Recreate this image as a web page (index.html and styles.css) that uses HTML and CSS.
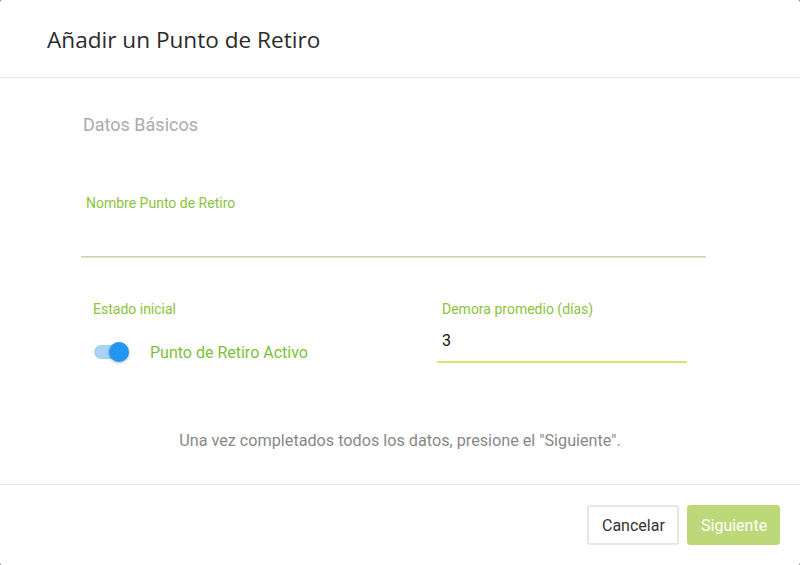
FILE: index.html
```html
<!DOCTYPE html>
<html lang="es">
<head>
<meta charset="utf-8">
<link rel="stylesheet" href="styles.css">
</head>
<body>
<div class="modal">
  <div class="modal-header">
    <h1 class="title">Añadir un Punto de Retiro</h1>
  </div>
  <div class="modal-body">
    <h2 class="section">Datos Básicos</h2>
    <div class="field field-full">
      <label class="label">Nombre Punto de Retiro</label>
      <div class="input-line input-empty"></div>
    </div>
    <div class="row">
      <div class="col col-left">
        <label class="label">Estado inicial</label>
        <div class="switch-row">
          <span class="switch"><span class="track"></span><span class="thumb"></span></span>
          <span class="switch-label">Punto de Retiro Activo</span>
        </div>
      </div>
      <div class="col col-right">
        <label class="label">Demora promedio (días)</label>
        <div class="input-value">3</div>
      </div>
    </div>
    <p class="help">Una vez completados todos los datos, presione el "Siguiente".</p>
  </div>
  <div class="modal-footer">
    <button class="btn btn-default">Cancelar</button>
    <button class="btn btn-primary">Siguiente</button>
  </div>
</div>
</body>
</html>
```
FILE: styles.css
```css
html, body {
  margin: 0;
  padding: 0;
  background: #555;
}
body {
  font-family: Roboto, "Liberation Sans", sans-serif;
}
.modal {
  width: 800px;
  height: 565px;
  background: #fff;
  border-radius: 2px;
  display: flex;
  flex-direction: column;
  box-sizing: border-box;
}
.modal-header {
  height: 77px;
  border-bottom: 1px solid #e8e8e8;
  display: flex;
  align-items: center;
  padding-left: 47px;
}
.title {
  margin: 0;
  font-family: "Open Sans", sans-serif;
  font-weight: 400;
  font-size: 22.6px;
  color: #2b2b2b;
  position: relative;
  top: 1px;
}
.modal-body {
  flex: 1;
  padding: 0 94px 0 81px;
  position: relative;
}
.section {
  margin: 36px 0 0 2px;
  font-size: 18px;
  font-weight: 400;
  color: #ababab;
  line-height: 22px;
}
.label {
  display: block;
  font-size: 14px;
  color: #8cc43c;
  line-height: 16px;
}
.field-full {
  margin-top: 59px;
}
.field-full .label {
  padding-left: 5px;
}
.input-empty {
  margin-top: 45px;
  border-top: 1px solid #cdcdcd;
  border-bottom: 1px solid #dcefa0;
  box-sizing: border-box;
  height: 2px;
}
.row {
  display: flex;
  margin-top: 43px;
}
.col-left {
  width: 344px;
  padding-left: 12px;
}
.col-right {
  width: 250px;
}
.col-right .label {
  padding-left: 5px;
}
.switch-row {
  display: flex;
  align-items: center;
  margin-top: 25px;
}
.switch {
  position: relative;
  width: 36px;
  height: 20px;
  display: inline-block;
  margin-left: 1px;
}
.track {
  position: absolute;
  left: 0;
  top: 3px;
  width: 34px;
  height: 14px;
  border-radius: 7px;
  background: #a7d3fa;
}
.thumb {
  position: absolute;
  left: 15px;
  top: 0;
  width: 20px;
  height: 20px;
  border-radius: 50%;
  background: #2196f3;
  box-shadow: 0 1px 3px rgba(0,0,0,0.3);
}
.switch-label {
  margin-left: 20px;
  font-size: 16px;
  color: #7cbf3a;
}
.input-value {
  margin-top: 14px;
  padding-left: 5px;
  font-size: 16px;
  color: #111;
  line-height: 20px;
  padding-bottom: 10px;
  border-bottom: 2px solid #cbea6e;
}
.help {
  margin: 68px 0 0 0;
  text-align: center;
  font-size: 16.2px;
  color: #888;
  padding-left: 13px;
}
.modal-footer {
  height: 81px;
  border-top: 1px solid #e8e8e8;
  display: flex;
  justify-content: flex-end;
  align-items: center;
  padding-right: 20px;
  gap: 8px;
  box-sizing: border-box;
}
.btn {
  font-family: Roboto, sans-serif;
  font-size: 16px;
  height: 40px;
  border-radius: 3px;
  padding: 0 13px;
  cursor: pointer;
}
.btn-default {
  background: #fff;
  border: 2px solid #e6e6e6;
  color: #333;
  width: 92px;
}
.btn-primary {
  background: #bdd878;
  border: 1px solid #bdd878;
  color: #fff;
  width: 93px;
}
```
